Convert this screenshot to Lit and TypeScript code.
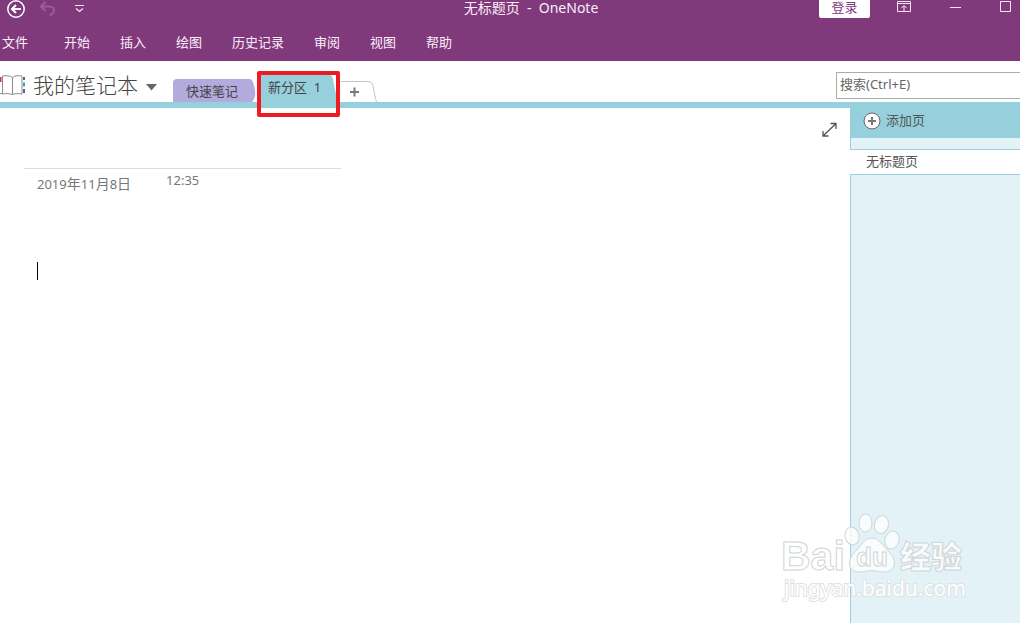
import { LitElement, html, css, svg } from "lit";
import { customElement, state } from "lit/decorators.js";

const MENU = ["开始", "插入", "绘图", "历史记录", "审阅", "视图", "帮助"];

@customElement("title-bar")
class TitleBar extends LitElement {
  static styles = css`
    :host { display: block; overflow: hidden; background: #80397b; color: #fbeefa; }
    button { font: inherit; color: inherit; background: none; border: 0; padding: 0; margin: 0; }
    svg { display: block; }
    .bar { display: grid; grid-template-columns: minmax(0, 1fr) auto minmax(0, 1fr); height: 18px; margin-right: -42px; line-height: 15px; }
    .quick { display: flex; align-items: flex-start; gap: 12px; padding-left: 6px; }
    .title { white-space: pre; font-size: 14px; }
    .window { display: flex; justify-content: flex-end; align-items: flex-start; padding-right: 50px; }
    .login { width: 51px; height: 18px; background: #fff; color: #80397b; border-radius: 0 0 2px 2px; line-height: 14px; padding-bottom: 4px; margin-right: 27px; }
    .pin { margin-right: 37px; }
    .min { margin-right: 38px; }
    nav { display: flex; gap: 30px; padding: 14px 0 0 2px; height: 29px; line-height: 20px; align-items: flex-start; }
    .file { margin-right: 6px; }
  `;

  render() {
    return html`
      <div class="bar">
        <div class="quick">
          <button aria-label="返回">
            <svg width="20" height="18" viewBox="0 0 20 18" fill="none" stroke="#fff">
              <circle cx="10" cy="9" r="8.2" stroke-width="1.5" />
              <path d="M15 9H6M10 5L6 9l4 4" stroke-width="2" />
            </svg>
          </button>
          <button aria-label="撤消">
            <svg width="20" height="18" viewBox="0 0 20 18" fill="none" stroke="#9a5c96" stroke-width="2">
              <path d="M7.5 2L3 6.500l4.500 4.500M3.500 6.500h8c3 0 5 2 4.500 4.500-.4 2-2 3.200-4.500 4" />
            </svg>
          </button>
          <button aria-label="自定义快速访问工具栏">
            <svg width="20" height="18" viewBox="0 0 20 18" fill="none" stroke="#f3e3f2">
              <path d="M5 5.500h9" /><path d="M6 8.500l3.500 3 3.500-3" stroke-width="1.300" />
            </svg>
          </button>
        </div>
        <div class="title">无标题页  -  OneNote</div>
        <div class="window">
          <button class="login">登录</button>
          <button class="pin" aria-label="功能区显示选项">
            <svg width="16" height="14" viewBox="0 0 16 14" fill="none" stroke="#f8e8f7">
              <path d="M.5 1.500h13v10h-13zM.5 3.500h13M7 11V5.500M4.500 8L7 5.500 9.500 8" />
            </svg>
          </button>
          <button class="min" aria-label="最小化">
            <svg width="12" height="14" viewBox="0 0 12 14" stroke="#f8e8f7"><path d="M0 7.500h11" /></svg>
          </button>
          <button aria-label="最大化">
            <svg width="12" height="14" viewBox="0 0 12 14" fill="none" stroke="#f8e8f7"><path d="M.5 1.500h10v10H.5z" /></svg>
          </button>
        </div>
      </div>
      <nav>
        <button class="file">文件</button>
        ${MENU.map((m) => html`<button>${m}</button>`)}
      </nav>
    `;
  }
}

@customElement("section-tabs")
class SectionTabs extends LitElement {
  static styles = css`
    :host { display: flex; align-items: flex-end; height: 41px; border-bottom: 6px solid #96d0dc; background: #fff; }
    button { font: inherit; color: #444; background: none; border: 0; padding: 0; margin: 0; }
    svg { display: block; }
    .notebook { display: flex; align-items: center; height: 34px; }
    .name { font-size: 21px; font-weight: 300; line-height: 34px; margin: 0 8px 0 8px; }
    .arrow { margin: 4px 16px 0 0; }
    .tab { position: relative; }
    .tab svg { position: absolute; inset: 0; }
    .label { position: relative; display: block; text-align: left; }
    .notes { width: 84px; height: 23px; }
    .notes .label { padding-left: 13px; line-height: 24px; }
    .section { width: 84px; height: 27px; }
    .section .label { padding-left: 11px; line-height: 24px; height: 27px; white-space: pre; }
    .mark { position: absolute; left: 0; top: -4px; width: 75px; height: 38px; border: 4px solid #ec1c24; border-radius: 2px; }
    .add { width: 36px; height: 21px; }
    .search { margin-left: auto; align-self: flex-start; margin-top: 11px; box-sizing: border-box; width: 190px; height: 27px; border: 1px solid #ababab; border-radius: 0; padding: 0 3px 3px; font: inherit; color: #666; margin-right: -6px; outline: 0; }
    .search::placeholder { color: #666; opacity: 1; }
  `;

  render() {
    return html`
      <button class="notebook">
        <svg width="25" height="24" viewBox="0 0 25 24" fill="none" stroke="#8a8a8a">
          <path d="M12.500 4.500C10 2.500 6 2.500 2.500 3v18c4-.6 7.500-.5 10 .5 2.500-1 6-1.100 9.500-.5V3c-3.500-.5-7-.5-9.500 1.500zM12.500 4.500v17" />
          <path d="M0 4v5" stroke="#d33b3b" stroke-width="3" />
          <path d="M0 20.500h2" />
          <path d="M24 4v3M24 16v4" stroke="#666" stroke-width="2" />
          <path d="M24 9.500v4" stroke="#3c9fb8" stroke-width="2" />
        </svg>
        <span class="name">我的笔记本</span>
        <svg class="arrow" width="11" height="7" viewBox="0 0 11 7"><path d="M0 0h11L5.500 6.500z" fill="#666" /></svg>
      </button>
      <button class="tab notes">
        <svg width="84" height="23" viewBox="0 0 84 23"><path d="M0 23V4q0-4 4-4h72q3 0 4 3 3 10 2 14-.5 3-3 6z" fill="#b3abde" /></svg>
        <span class="label">快速笔记</span>
      </button>
      <button class="tab section">
        <svg width="84" height="27" viewBox="0 0 84 27"><path d="M0 27V0h73q2 0 3 4 2 14 6 23z" fill="#96d0dc" /></svg>
        <span class="label">新分区  1</span>
        <span class="mark"></span>
      </button>
      <button class="tab add" aria-label="新建分区">
        <svg width="36" height="21" viewBox="0 0 36 21" fill="none">
          <path d="M0 .5h28q3 0 4 4 2 12 3.500 16.500" stroke="#c4c4c4" />
          <path d="M9 11h9M13.500 6.500v9" stroke="#777" stroke-width="2" />
        </svg>
      </button>
      <input class="search" type="text" aria-label="搜索" placeholder="搜索(Ctrl+E)" />
    `;
  }
}

@customElement("page-list")
class PageList extends LitElement {
  static styles = css`
    :host { display: flex; flex-direction: column; width: 170px; background: #e3f2f6; }
    button { font: inherit; color: #555; border: 0; margin: 0; text-align: left; }
    .add { display: flex; align-items: center; gap: 5px; height: 30px; padding: 0 0 4px 13px; background: #96d0dc; line-height: 16px; }
    .add span { padding-bottom: 2px; }
    .gap { height: 11px; border-left: 1px solid #9dd0de; }
    .page { height: 26px; padding: 0 0 3px 16px; background: #fff; border: solid #9dd0de; border-width: 1px 0; }
    .rest { flex: 1; border-left: 1px solid #9dd0de; }
  `;

  render() {
    return html`
      <button class="add">
        <svg width="18" height="18" viewBox="0 0 18 18">
          <circle cx="9" cy="9" r="8" fill="#fff" stroke="#666" />
          <path d="M5 9h8M9 5v8" stroke="#777" stroke-width="2" />
        </svg>
        <span>添加页</span>
      </button>
      <div class="gap"></div>
      <button class="page">无标题页</button>
      <div class="rest"></div>
    `;
  }
}

@customElement("page-watermark")
class PageWatermark extends LitElement {
  static styles = css`
    svg { display: block; }
    .mark { fill: #fff; fill-opacity: 0.75; stroke: #d0d5d7; stroke-width: 1; }
    .brand { font: 700 41px "Liberation Sans", sans-serif; }
    .small { font: 700 26px "Liberation Sans", sans-serif; }
    .cjk { font: 900 31px "Noto Sans CJK SC", sans-serif; }
    .url { font: 400 21px "Noto Sans", sans-serif; paint-order: stroke; stroke-width: 2; fill-opacity: 1; stroke: #dde2e4; }
  `;

  render() {
    return html`
      <svg width="190" height="92" viewBox="0 0 190 92" aria-hidden="true">
        ${svg`
          <text class="mark brand" x="3" y="58">Bai</text>
          <g class="mark">
            <ellipse cx="74" cy="24" rx="7" ry="9" transform="rotate(-12 74 24)" />
            <ellipse cx="87.500" cy="11" rx="6.500" ry="9" />
            <ellipse cx="103.500" cy="12.500" rx="7" ry="9" transform="rotate(12 103.500 12.500)" />
            <ellipse cx="114" cy="28" rx="7" ry="9" transform="rotate(15 114 28)" />
            <path d="M93.500 26c-6 0-9 5-12 9-4 5-10 9-10 16 0 6 4 9 10 9 5 0 8-1.500 12-1.500s8 1.500 12 1.500c6 0 11-3 11-9 0-7-6-11-10-16-3-4-7-9-13-9z" />
          </g>
          <text class="mark small" x="78" y="54">du</text>
          <text class="mark cjk" x="122" y="56">经验</text>
          <text class="mark url" x="6" y="84">jingyan.baidu.com</text>
        `}
      </svg>
    `;
  }
}

@customElement("app-root")
class AppRoot extends LitElement {
  @state() private date = { y: "2019", m: "11", d: "8" };

  static styles = css`
    :host { display: flex; flex-direction: column; position: relative; min-height: 100vh; overflow: hidden; background: #fff; color: #444; font: 13px "Noto Sans", "Noto Sans CJK SC", sans-serif; }
    .body { display: flex; flex: 1; }
    .paper { flex: 1; display: flex; justify-content: space-between; align-items: flex-start; }
    .note { padding: 60px 0 0 24px; }
    .meta { display: flex; width: 317px; box-sizing: border-box; border-top: 1px solid #dcdcdc; padding: 2px 0 0 13px; color: #777; line-height: 18px; gap: 35px; }
    .date { font-size: 14px; padding-top: 4px; }
    .num { font-size: 13px; }
    .caret { width: 1px; height: 18px; margin: 69px 0 0 13px; background: #000; }
    .expand { border: 0; background: none; padding: 14px 13px 0 0; margin: 0; }
    .expand svg { display: block; }
    .watermark { position: absolute; right: 52px; bottom: 19px; }
  `;

  render() {
    const { y, m, d } = this.date;
    const n = (v: string) => html`<span class="num">${v}</span>`;
    return html`
      <title-bar></title-bar>
      <section-tabs></section-tabs>
      <div class="body">
        <main class="paper">
          <div class="note">
            <div class="meta">
              <span class="date">${n(y)}年${n(m)}月${n(d)}日</span>
              <span>12:35</span>
            </div>
            <div class="caret"></div>
          </div>
          <button class="expand" aria-label="整页视图">
            <svg width="15" height="16" viewBox="0 0 15 16" fill="none" stroke="#555" stroke-width="1.300">
              <path d="M1 14L14 1.500M8.500 1.500h5.500V7M1 9v5h5.500" />
            </svg>
          </button>
        </main>
        <page-list></page-list>
      </div>
      <page-watermark class="watermark"></page-watermark>
    `;
  }
}
